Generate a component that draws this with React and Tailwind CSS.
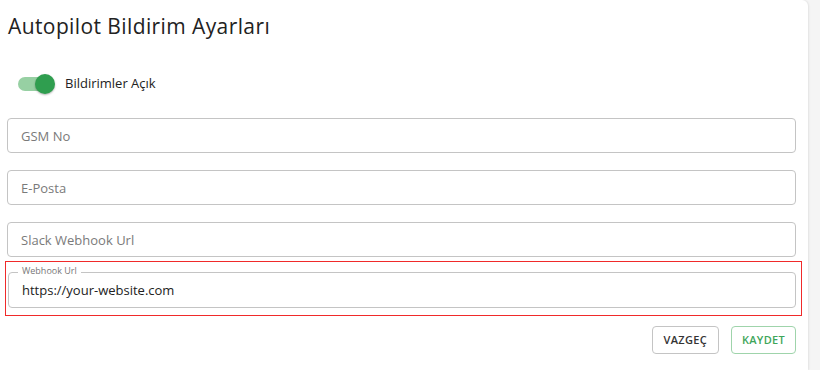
import React, { useState } from "react";

function Field({ placeholder }) {
  return (
    <input
      className="h-[35px] w-full rounded-[4px] border border-[#c4c4c4] bg-white px-[13px] text-[13px] text-[#222] placeholder:text-[#7a7a7a] outline-none"
      placeholder={placeholder}
    />
  );
}

export default function App() {
  const [enabled, setEnabled] = useState(true);
  const [url, setUrl] = useState("https://your-website.com");

  return (
    <div className="flex h-[370px] w-[820px] bg-[#f5f5f5] font-[Open_Sans,sans-serif]">
      <div className="flex w-[808px] flex-col rounded-tr-[6px] bg-white px-[7px] pt-[10px] shadow-[1px_0_2px_rgba(0,0,0,0.08)]">
        {/* HEADER */}
        <h1 className="pl-[1px] text-[21px] font-normal leading-[32px] tracking-[0.4px] text-[#222]">
          Autopilot Bildirim Ayarları
        </h1>

        {/* TOGGLE */}
        <div className="mt-[32px] flex items-center gap-[9px] pl-[11px]">
          <button
            className="relative h-[20px] w-[38px]"
            onClick={() => setEnabled(!enabled)}
          >
            <span
              className={
                enabled
                  ? "absolute left-0 top-[3px] h-[14px] w-[34px] rounded-full bg-[#97d0a3]"
                  : "absolute left-0 top-[3px] h-[14px] w-[34px] rounded-full bg-[#bdbdbd]"
              }
            />
            <span
              className={
                enabled
                  ? "absolute left-[17px] top-0 h-[20px] w-[20px] rounded-full bg-[#2f9e4f] shadow-[0_1px_2px_rgba(0,0,0,0.3)]"
                  : "absolute left-0 top-0 h-[20px] w-[20px] rounded-full bg-[#fafafa] shadow-[0_1px_2px_rgba(0,0,0,0.3)]"
              }
            />
          </button>
          <span className="text-[13px] text-[#222]">Bildirimler Açık</span>
        </div>

        {/* FIELDS */}
        <div className="mt-[24px] flex flex-col gap-[17px] pr-[5px]">
          <Field placeholder="GSM No" />
          <Field placeholder="E-Posta" />
          <Field placeholder="Slack Webhook Url" />
        </div>

        {/* focused field, red frame */}
        <div className="mt-[4px] -ml-[2px] -mr-[1px] border border-[#f02a2a] pt-[10px] pb-[7px] pl-[2px] pr-[5px]">
          <div className="relative">
            <span className="absolute left-[10px] top-[-7px] bg-white px-[4px] text-[9px] leading-[12px] text-[#777]">
              Webhook Url
            </span>
            <input
              className="h-[36px] w-full rounded-[4px] border border-[#c4c4c4] bg-white px-[13px] text-[13px] text-[#222] outline-none"
              value={url}
              onChange={(e) => setUrl(e.target.value)}
            />
          </div>
        </div>

        {/* ACTIONS */}
        <div className="mt-[10px] flex justify-end gap-[12px] pr-[5px]">
          <button className="h-[28px] rounded-[4px] border border-[#c4c4c4] px-[11px] text-[11px] font-semibold tracking-[0.3px] text-[#333]">
            VAZGEÇ
          </button>
          <button className="h-[28px] rounded-[4px] border border-[#9fd4ab] px-[10px] text-[11px] font-semibold tracking-[0.3px] text-[#3ea65a]">
            KAYDET
          </button>
        </div>
      </div>
    </div>
  );
}
